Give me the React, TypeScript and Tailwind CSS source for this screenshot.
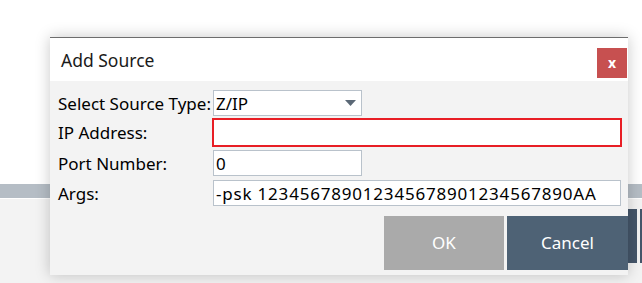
const font = { fontFamily: '"Noto Sans", "Open Sans", sans-serif' };

function Field({ label, children, className }: { label: string; children: React.ReactNode; className?: string }) {
  return (
    <div className={"flex items-center " + (className ?? "")}>
      <div className="w-[163px] shrink-0 pl-[8px] text-[17px] text-black leading-none whitespace-nowrap">{label}</div>
      {children}
    </div>
  );
}

export default function App() {
  return (
    <div className="relative w-[642px] h-[283px] overflow-hidden bg-white" style={font}>
      {/* page behind the dialog */}
      <div className="h-[184px] bg-white" />
      <div className="h-[14px] bg-[#b5bdc5]" />
      <div className="h-[1px] bg-white" />
      <div className="h-[84px] bg-[#f3f3f3] flex justify-end items-start pt-[10px] gap-[3px]">
        <div className="w-[9px] h-[54px] bg-[#45566a]" />
        <div className="w-[2px] h-[54px] bg-[#45566a]" />
      </div>

      {/* dialog */}
      <div className="absolute left-[50px] top-[37px] w-[578px] h-[238px] flex flex-col border-t border-[#6d6d6d] shadow-[0_0_14px_rgba(0,0,0,0.22)]">
        <div className="h-[43px] bg-white flex items-start justify-between">
          <div className="pl-[11px] pt-[14px] text-[17.5px] text-[#1a1a1a] leading-none">Add Source</div>
          <button className="mt-[10px] mr-[1px] w-[30px] h-[30px] bg-[#c75050] flex items-center justify-center text-white text-[14px] font-bold leading-none">
            x
          </button>
        </div>
        <div className="flex-1 bg-[#f3f3f3] flex flex-col pt-[9px]">
          <Field label="Select Source Type:">
            <div className="w-[149px] h-[26px] bg-white border border-[#b9c2cb] flex items-center justify-between pl-[2px] pr-[5px]">
              <span className="text-[17px] leading-none text-black">Z/IP</span>
              <svg width="11" height="6" viewBox="0 0 11 6">
                <path d="M0 0 L11 0 L5.5 6 Z" fill="#5b6876" />
              </svg>
            </div>
          </Field>
          <Field label="IP Address:" className="mt-[2px]">
            <div className="ml-[-1px] w-[410px] h-[29px] bg-white border-2 border-[#e81e25]" />
          </Field>
          <Field label="Port Number:" className="mt-[3px]">
            <div className="w-[149px] h-[26px] bg-white border border-[#b9c2cb] flex items-center pl-[2px]">
              <span className="text-[17px] leading-none text-black">0</span>
            </div>
          </Field>
          <Field label="Args:" className="mt-[4px]">
            <div className="w-[408px] h-[26px] bg-white border border-[#b9c2cb] flex items-center pl-[2px]">
              <span className="text-[17px] leading-none text-black whitespace-nowrap tracking-[0.8px]">-psk 123456789012345678901234567890AA</span>
            </div>
          </Field>
          <div className="flex justify-end gap-[3px] mt-[10px]">
            <button className="w-[120px] h-[54px] bg-[#aaaaaa] text-white text-[17px]">OK</button>
            <button className="w-[121px] h-[54px] bg-[#4e6275] text-white text-[17px]">Cancel</button>
          </div>
        </div>
      </div>
    </div>
  );
}
